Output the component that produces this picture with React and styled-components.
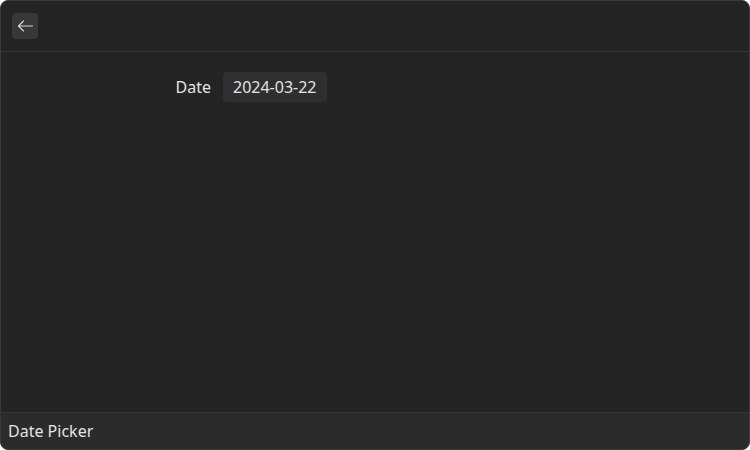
import React from 'react';
import styled, { createGlobalStyle } from 'styled-components';

const GlobalStyle = createGlobalStyle`
  html, body {
    margin: 0;
    padding: 0;
    background: #ffffff;
  }
  * {
    box-sizing: border-box;
  }
`;

const Window = styled.div`
  width: 750px;
  height: 450px;
  display: flex;
  flex-direction: column;
  background: #242424;
  border: 1px solid #3a3a3a;
  border-radius: 8px;
  overflow: hidden;
  font-family: 'Noto Sans', 'Open Sans', sans-serif;
  color: #e3e3e3;
`;

const Header = styled.div`
  height: 51px;
  flex-shrink: 0;
  display: flex;
  align-items: center;
  padding: 0 11px;
  border-bottom: 1px solid #363636;
`;

const BackButton = styled.button`
  width: 26px;
  height: 26px;
  display: flex;
  align-items: center;
  justify-content: center;
  padding: 0;
  border: none;
  border-radius: 4px;
  background: #383838;
  color: #d8d8d8;
  cursor: pointer;
`;

const Body = styled.div`
  flex: 1;
  padding: 20px 0 0;
`;

const Field = styled.div`
  display: flex;
  align-items: center;
  gap: 12px;
`;

const Label = styled.label`
  width: 210px;
  text-align: right;
  font-size: 16px;
`;

const DateValue = styled.div`
  height: 30px;
  display: flex;
  align-items: center;
  padding: 0 10px;
  border-radius: 4px;
  background: #2f2f2f;
  font-size: 16px;
`;

const Footer = styled.div`
  height: 37px;
  flex-shrink: 0;
  display: flex;
  align-items: center;
  padding: 0 7px;
  background: #2b2b2b;
  border-top: 1px solid #363636;
  font-size: 16px;
`;

const App = () => {
  return (
    <>
      <GlobalStyle />
      <Window>
        <Header>
          <BackButton aria-label="Back">
            <svg width="16" height="16" viewBox="0 0 16 16" fill="none">
              <path
                d="M15.5 8H1.5M6.5 3L1.5 8L6.5 13"
                stroke="currentColor"
                strokeWidth="1.1"
                strokeLinecap="round"
                strokeLinejoin="round"
              />
            </svg>
          </BackButton>
        </Header>
        <Body>
          <Field>
            <Label>Date</Label>
            <DateValue>2024-03-22</DateValue>
          </Field>
        </Body>
        <Footer>Date Picker</Footer>
      </Window>
    </>
  );
};

export default App;
